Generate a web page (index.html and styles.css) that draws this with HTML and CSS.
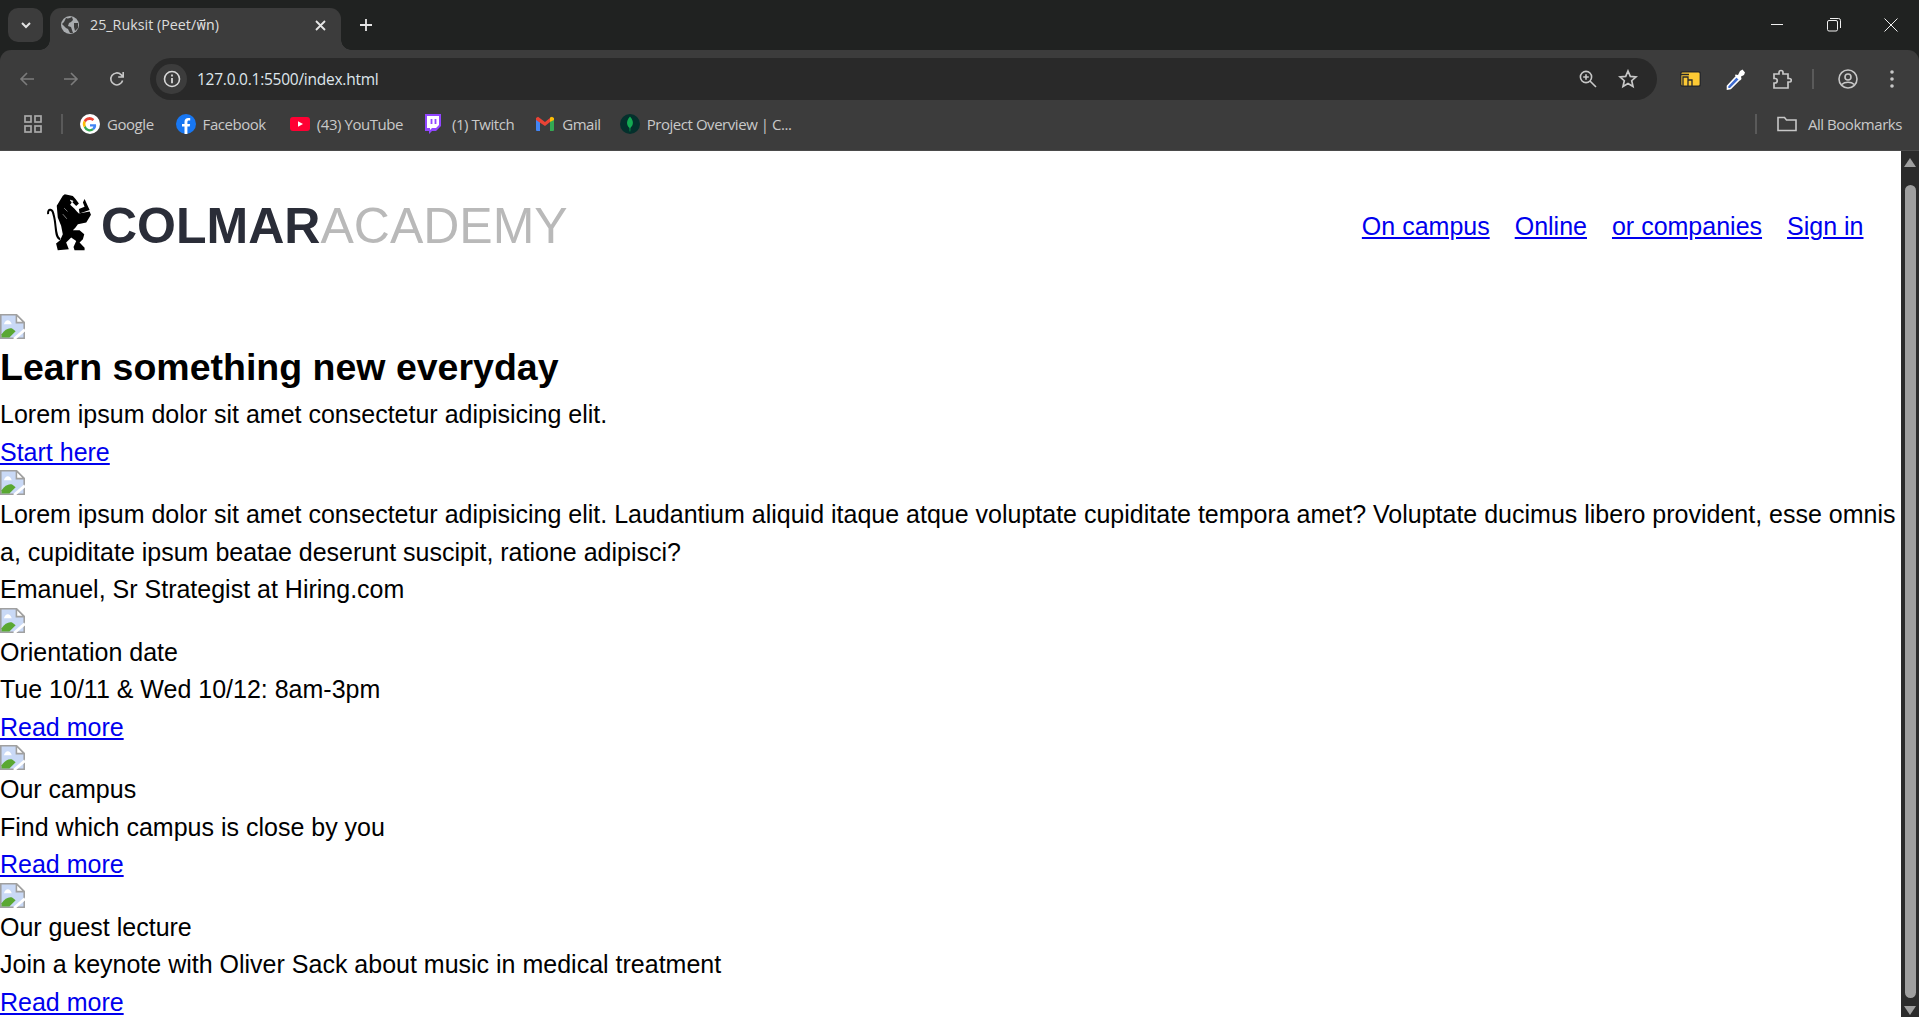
FILE: index.html
```html
<!DOCTYPE html>
<html lang="en">
<head>
<meta charset="utf-8">
<title>25_Ruksit (Peet/พีท)</title>
<link rel="stylesheet" href="styles.css">
</head>
<body>
<div class="window">
  <div class="tabstrip">
    <div class="tab-search"><svg width="14" height="14" viewBox="0 0 14 14"><path d="M3 5l4 4 4-4" fill="none" stroke="#e3e3e3" stroke-width="2"/></svg></div>
    <div class="tab">
      <svg class="favicon" width="18" height="18" viewBox="0 0 18 18"><circle cx="9" cy="9" r="9" fill="#a9acaf"/><path d="M5 2c2 1 4 0 6-1l1 3-2 2-2 1-1 3 3 1 1 3 1 3H9L7 13 5 12 1 8l2-2z" fill="#3c3c3c"/><path d="M13 7l4 0 0 5-3 3-1-4z" fill="#3c3c3c"/></svg>
      <span class="tab-title">25_Ruksit (Peet/พีท)</span>
      <svg class="tab-close" width="11" height="11" viewBox="0 0 11 11"><path d="M1 1l9 9M10 1l-9 9" stroke="#e6e6e6" stroke-width="1.8"/></svg>
    </div>
    <svg class="new-tab" width="14" height="14" viewBox="0 0 14 14"><path d="M7 1v12M1 7h12" stroke="#e6e6e6" stroke-width="1.8"/></svg>
    <div class="win-controls">
      <svg width="14" height="14" viewBox="0 0 14 14"><path d="M1 6.500h12" stroke="#f0f0f0" stroke-width="1"/></svg>
      <svg width="14" height="14" viewBox="0 0 14 14"><rect x=".5" y="2.500" width="10" height="10.500" rx="1.500" fill="none" stroke="#f0f0f0"/><path d="M3 .5h8.500a2 2 0 0 1 2 2V10" fill="none" stroke="#f0f0f0"/></svg>
      <svg width="14" height="14" viewBox="0 0 14 14"><path d="M.5.5l13 13M13.500.5l-13 13" stroke="#f0f0f0" stroke-width="1"/></svg>
    </div>
  </div>

  <div class="toolbar">
    <svg class="nav-icon" width="16" height="16" viewBox="0 0 16 16"><path d="M15 8H2M8 2L2 8l6 6" fill="none" stroke="#7c7c7c" stroke-width="1.600"/></svg>
    <svg class="nav-icon" width="16" height="16" viewBox="0 0 16 16"><path d="M1 8h13M8 2l6 6-6 6" fill="none" stroke="#7c7c7c" stroke-width="1.600"/></svg>
    <svg class="nav-icon" width="16" height="16" viewBox="0 0 16 16"><path d="M13.600 9.500A6 6 0 1 1 12 3.600L14 5.600M14.200 1v5h-5" fill="none" stroke="#c7c7c7" stroke-width="1.600"/></svg>
    <div class="omnibox">
      <div class="site-info"><svg width="18" height="18" viewBox="0 0 18 18"><circle cx="9" cy="9" r="7.500" fill="none" stroke="#d8d8d8" stroke-width="1.600"/><path d="M9 8v5.200M9 4.600v1.800" stroke="#d8d8d8" stroke-width="1.800"/></svg></div>
      <span class="url">127.0.0.1:5500/index.html</span>
      <svg class="omni-zoom" width="18" height="18" viewBox="0 0 18 18"><circle cx="7" cy="7" r="5.600" fill="none" stroke="#c7c7c7" stroke-width="1.600"/><path d="M11 11l6 6M4.200 7h5.600M7 4.200v5.600" stroke="#c7c7c7" stroke-width="1.600"/></svg>
      <svg class="omni-star" width="20" height="20" viewBox="0 0 20 20"><path d="M10 2l2.300 5.400 5.700.5-4.300 3.800 1.300 5.700L10 14.400l-5 3 1.300-5.700L2 7.900l5.700-.5z" fill="none" stroke="#c7c7c7" stroke-width="1.700"/></svg>
    </div>
    <svg class="ext-docs" width="21" height="16" viewBox="0 0 21 16"><rect x=".7" y=".7" width="19.600" height="14.600" rx="2" fill="#fcc934" stroke="#27292d" stroke-width="1.400"/><path d="M1 3.500h8M3 15V6h5v9M8 9h4v6" fill="none" stroke="#27292d" stroke-width="1.300"/></svg>
    <svg class="ext-drop" width="20" height="22" viewBox="0 0 20 22"><path d="M1.500 18L10.500 8.500l3 3L4.500 20.500l-3 .5z" fill="#3d6bd0" stroke="#fff" stroke-width="1.600"/><path d="M9.500 6.500l2.500.5 2-4 2.500-1.500 2.500 3-1 2.500-3 1.500.5 2.500-1.500 1.500-5-5z" fill="#fff"/></svg>
    <svg class="ext-puzzle" width="20" height="20" viewBox="0 0 20 20"><path d="M2 5h5V3.500a2 2 0 0 1 4 0V5h5v4.500h1.500a1.700 1.700 0 0 1 0 3.500H16v6H2v-5h1a2 2 0 0 0 0-4.500H2z" fill="none" stroke="#c7c7c7" stroke-width="1.700"/></svg>
    <span class="tool-sep"></span>
    <svg class="profile" width="20" height="20" viewBox="0 0 20 20"><circle cx="10" cy="10" r="9" fill="none" stroke="#c7c7c7" stroke-width="1.600"/><circle cx="10" cy="8" r="3" fill="none" stroke="#c7c7c7" stroke-width="1.600"/><path d="M3.800 15.500c3-3 9.400-3 12.400 0" fill="none" stroke="#c7c7c7" stroke-width="1.600"/></svg>
    <svg class="menu-dots" width="4" height="18" viewBox="0 0 4 18"><circle cx="2" cy="2" r="1.800" fill="#c7c7c7"/><circle cx="2" cy="9" r="1.800" fill="#c7c7c7"/><circle cx="2" cy="16" r="1.800" fill="#c7c7c7"/></svg>
  </div>

  <div class="bookmarks">
    <svg class="apps" width="18" height="18" viewBox="0 0 18 18"><g fill="none" stroke="#a9a9a9" stroke-width="1.700"><rect x="1" y="1" width="6" height="6"/><rect x="11" y="1" width="6" height="6"/><rect x="1" y="11" width="6" height="6"/><rect x="11" y="11" width="6" height="6"/></g></svg>
    <span class="bm-sep"></span>
    <span class="bm bm-google"><svg width="20" height="20" viewBox="0 0 20 20"><circle cx="10" cy="10" r="10" fill="#fff"/><path d="M16 10.200h-6v2.300h3.400a3.600 3.600 0 0 1-1.500 2l2 1.500A6 6 0 0 0 16 10.200z" fill="#4285f4"/><path d="M5.800 11.800l-2 1.600A6.500 6.500 0 0 0 13.900 16l-2-1.500a3.900 3.900 0 0 1-6.100-2.700z" fill="#34a853"/><path d="M5.800 8.200l-2-1.600a6.500 6.500 0 0 0 0 6.800l2-1.600a3.900 3.900 0 0 1 0-3.600z" fill="#fbbc05"/><path d="M10 6.100c1 0 1.800.3 2.500 1l1.800-1.800A6.400 6.400 0 0 0 3.800 6.600l2 1.600A3.900 3.900 0 0 1 10 6.100z" fill="#ea4335"/></svg>Google</span>
    <span class="bm bm-facebook"><svg width="20" height="20" viewBox="0 0 20 20"><circle cx="10" cy="10" r="10" fill="#1877f2"/><path d="M8.500 20v-7.500H6V10h2.500V7.700c0-2.500 1.500-3.800 3.700-3.800l2 .2v2.300h-1.300c-1.100 0-1.500.7-1.500 1.500V10h2.700l-.4 2.500h-2.300V20z" fill="#fff"/></svg>Facebook</span>
    <span class="bm bm-youtube"><svg width="20" height="20" viewBox="0 0 20 20"><rect y="3" width="20" height="14" rx="3" fill="#ff0033"/><path d="M8 7.200l5 2.800-5 2.800z" fill="#fff"/></svg>(43) YouTube</span>
    <span class="bm bm-twitch"><svg width="18" height="20" viewBox="0 0 18 20"><path d="M2 0h16v12l-5 5H9l-3 3v-3H2z" fill="#9146ff"/><path d="M4 2h12v9l-3 3H9l-2 2v-2H4z" fill="#fff"/><path d="M8.500 5v5M12.500 5v5" stroke="#9146ff" stroke-width="1.800"/></svg>(1) Twitch</span>
    <span class="bm bm-gmail"><svg width="18" height="16" viewBox="0 0 18 16"><path d="M0 3l4 3v9H1a1 1 0 0 1-1-1z" fill="#4285f4"/><path d="M18 3l-4 3v9h3a1 1 0 0 0 1-1z" fill="#34a853"/><path d="M14 6V1.500l2-.8 2 1.300V4z" fill="#fbbc05"/><path d="M0 2l2-1.300L9 6l5-4v4L9 10 0 4z" fill="#ea4335"/></svg>Gmail</span>
    <span class="bm bm-mongo"><svg width="20" height="20" viewBox="0 0 20 20"><circle cx="10" cy="10" r="10" fill="#04302c"/><path d="M10 2.500c2.800 3 3.500 6 2.500 8.500-.6 1.400-1.800 2.300-2.100 3l-.2 3.500h-.5l-.2-3.500C9 13.500 7.900 12.500 7.400 11 6.500 8.500 7.200 5.500 10 2.500z" fill="#13aa52"/></svg>Project Overview | C...</span>
    <span class="bm-sep bm-sep-right"></span>
    <span class="bm bm-all"><svg width="20" height="16" viewBox="0 0 20 16"><path d="M1 14.500V1.500h6.500l2 2.500h9.500v10.500z" fill="none" stroke="#c7c7c7" stroke-width="1.600"/></svg>All Bookmarks</span>
  </div>

  <div class="viewport">
    <main class="page">
      <header class="site-header">
        <div class="logo">
          <svg class="lion" width="47" height="57" viewBox="50 40 140 170"><path d="M100 45L106 41 120 44 130 46 138 55 148 68 140 76 128 64 122 72 135 84 142 92 148 98 180 92 184 102 170 125 145 130 138 140 130 148 150 148 164 160 160 175 150 185 165 200 165 208 135 208 132 198 140 180 125 170 110 185 118 205 85 208 80 188 92 178 100 160 95 135 85 110 82 75Z" fill="#000"/><path d="M165 55L180 88 150 98 148 85 165 78 160 65Z" fill="#000"/><path d="M92 175C75 170 82 130 72 100 70 85 55 80 56 100" fill="none" stroke="#000" stroke-width="6"/><path d="M122 58l9 3-4 4zM100 100l12 14M104 82l10 10" fill="#fff" stroke="#fff" stroke-width="1.500"/></svg>
          <span class="logo-strong">COLMAR</span><span class="logo-light">ACADEMY</span>
        </div>
        <nav class="main-nav">
          <a href="#">On campus</a>
          <a href="#">Online</a>
          <a href="#">or companies</a>
          <a href="#">Sign in</a>
        </nav>
      </header>

      <svg class="broken" width="25" height="25" viewBox="0 0 16 16"><use href="#broken-img"/></svg>
      <h1>Learn something new everyday</h1>
      <p>Lorem ipsum dolor sit amet consectetur adipisicing elit.</p>
      <p><a href="#">Start here</a></p>

      <svg class="broken" width="25" height="25" viewBox="0 0 16 16"><use href="#broken-img"/></svg>
      <p>Lorem ipsum dolor sit amet consectetur adipisicing elit. Laudantium aliquid itaque atque voluptate cupiditate tempora amet? Voluptate ducimus libero provident, esse omnis a, cupiditate ipsum beatae deserunt suscipit, ratione adipisci?</p>
      <p>Emanuel, Sr Strategist at Hiring.com</p>

      <svg class="broken" width="25" height="25" viewBox="0 0 16 16"><use href="#broken-img"/></svg>
      <p>Orientation date</p>
      <p>Tue 10/11 &amp; Wed 10/12: 8am-3pm</p>
      <p><a href="#">Read more</a></p>

      <svg class="broken" width="25" height="25" viewBox="0 0 16 16"><use href="#broken-img"/></svg>
      <p>Our campus</p>
      <p>Find which campus is close by you</p>
      <p><a href="#">Read more</a></p>

      <svg class="broken" width="25" height="25" viewBox="0 0 16 16"><use href="#broken-img"/></svg>
      <p>Our guest lecture</p>
      <p>Join a keynote with Oliver Sack about music in medical treatment</p>
      <p><a href="#">Read more</a></p>
    </main>
    <div class="scrollbar">
      <svg width="12" height="9" viewBox="0 0 12 9"><path d="M6 0L12 9H0z" fill="#9f9f9f"/></svg>
      <div class="thumb"></div>
      <svg width="12" height="9" viewBox="0 0 12 9"><path d="M6 9L12 0H0z" fill="#9f9f9f"/></svg>
    </div>
  </div>
</div>
<svg class="defs" width="0" height="0"><defs><g id="broken-img"><path d="M.5.500H10.500L15.500 5.500V15.500H.5z" fill="#c9d9f6" stroke="#a0a0a0"/><path d="M10.500.5V5.500h5z" fill="#fff" stroke="#a0a0a0"/><path d="M2.500 6.500c.5-1.500 1.500-2.500 2.500-2.500s2 1 2.500 2.500z" fill="#fff"/><path d="M1 15v-2c2-3 5-4.500 7-3.500l2 1.500-4 4z" fill="#5aa832"/><path d="M9 16l7-6" stroke="#fff" stroke-width="1.800"/></g></defs></svg>
</body>
</html>
```

FILE: styles.css
```css
* { box-sizing: border-box; }
html, body { margin: 0; height: 100%; overflow: hidden; }
body { font-family: "Liberation Sans", Arial, sans-serif; background: #fff; }
.defs { position: absolute; }

.window { display: flex; flex-direction: column; height: 1017px; background: #202221; }

/* Browser chrome */
.tabstrip { height: 50px; flex: none; display: flex; align-items: flex-start; background: #202221; padding-left: 8px; font-family: "Open Sans", "Noto Sans CJK SC", "Noto Sans Thai", sans-serif; }
.tab-search { width: 35px; height: 34px; margin-top: 8px; background: #3c3c3c; border-radius: 10px; display: flex; align-items: center; justify-content: center; }
.tab { position: relative; width: 291px; height: 42px; margin: 8px 0 0 7px; background: #3c3c3c; border-radius: 11px 11px 0 0; display: flex; align-items: center; padding: 0 15px 8px 11px; color: #dcdcdc; font-size: 14.3px; }
.tab::before, .tab::after { content: ""; position: absolute; bottom: 0; width: 10px; height: 10px; }
.tab::before { left: -10px; background: radial-gradient(circle at 0 0, #202221 9.5px, #3c3c3c 10px); }
.tab::after { right: -10px; background: radial-gradient(circle at 100% 0, #202221 9.5px, #3c3c3c 10px); }
.favicon { margin-right: 11px; flex: none; }
.tab-title { flex: 1; white-space: nowrap; }
.tab-close { flex: none; }
.new-tab { margin: 18px 0 0 18px; flex: none; }
.win-controls { margin-left: auto; display: flex; gap: 43px; padding: 18px 21px 0 0; }

.toolbar { height: 50px; flex: none; display: flex; align-items: center; background: #3c3c3c; border-radius: 11px 11px 0 0; padding: 8px 0 0 19px; }
.nav-icon { margin-right: 28px; flex: none; }
.nav-icon:nth-child(3) { margin-left: 2px; margin-right: 25px; }
.omnibox { width: 1507px; height: 42px; flex: none; background: #292929; border-radius: 21px; display: flex; align-items: center; padding-left: 6px; }
.site-info { width: 31px; height: 30px; background: #3c3c3c; border-radius: 15px; display: flex; align-items: center; justify-content: center; flex: none; }
.url { flex: 1; margin-left: 10px; color: #dfe6ec; font: 15.5px "Open Sans", sans-serif; letter-spacing: -.25px; }
.omni-zoom { flex: none; margin-right: 21px; }
.omni-star { flex: none; margin-right: 19px; }
.ext-docs { margin: 0 0 0 23px; flex: none; }
.ext-drop { margin-left: 25px; flex: none; }
.ext-puzzle { margin-left: 26px; flex: none; }
.tool-sep { width: 2px; height: 20px; margin-left: 20px; background: #5a5a5a; flex: none; }
.profile { margin-left: 24px; flex: none; }
.menu-dots { margin-left: 32px; flex: none; }

.bookmarks { height: 51px; flex: none; display: flex; align-items: center; background: #3c3c3c; padding: 0 17px 2px 24px; color: #c9c9c9; font: 15px "Open Sans", sans-serif; letter-spacing: -.45px; border-bottom: 1px solid #4a4a4a; }
.apps { flex: none; }
.bm-sep { width: 2px; height: 20px; margin-left: 19px; background: #5a5a5a; flex: none; }
.bm { display: flex; align-items: center; gap: 7px; white-space: nowrap; }
.bm-google { margin-left: 17px; }
.bm-facebook { margin-left: 22px; }
.bm-youtube { margin-left: 24px; }
.bm-twitch { margin-left: 20px; gap: 11px; }
.bm-gmail { margin-left: 22px; gap: 8px; }
.bm-mongo { margin-left: 19px; }
.bm-sep-right { margin-left: auto; }
.bm-all { margin-left: 20px; gap: 11px; }

/* Page */
.viewport { flex: 1; min-height: 0; display: flex; }
.page { flex: 1; min-width: 0; overflow: hidden; background: #fff; color: #000; font-size: 25px; line-height: 37.5px; }
.site-header { height: 164px; display: flex; align-items: flex-start; justify-content: space-between; padding: 0 37.5px 0 46px; }
.logo { height: 150px; display: flex; align-items: center; padding-bottom: 1px; font-size: 50px; line-height: 1; }
.lion { flex: none; margin: 0 8px 7px 0; }
.logo-strong { font-weight: 700; color: #2a2d38; }
.logo-light { color: #b9b9b9; }
.main-nav { height: 150px; display: flex; align-items: center; gap: 25px; padding-top: 2px; }
a { color: #0000ee; }
.broken { display: block; margin: -1px 0 1px; }
h1 { margin: 0 0 2px; font-size: 37.5px; line-height: 54px; font-weight: 700; }
p { margin: 0; }

/* Scrollbar */
.scrollbar { width: 18px; flex: none; background: #2b2b2b; display: flex; flex-direction: column; align-items: center; padding: 7px 0 2px; }
.thumb { width: 11px; flex: 1; margin: 18px 0 8px; background: #9f9f9f; border-radius: 6px; }
```
